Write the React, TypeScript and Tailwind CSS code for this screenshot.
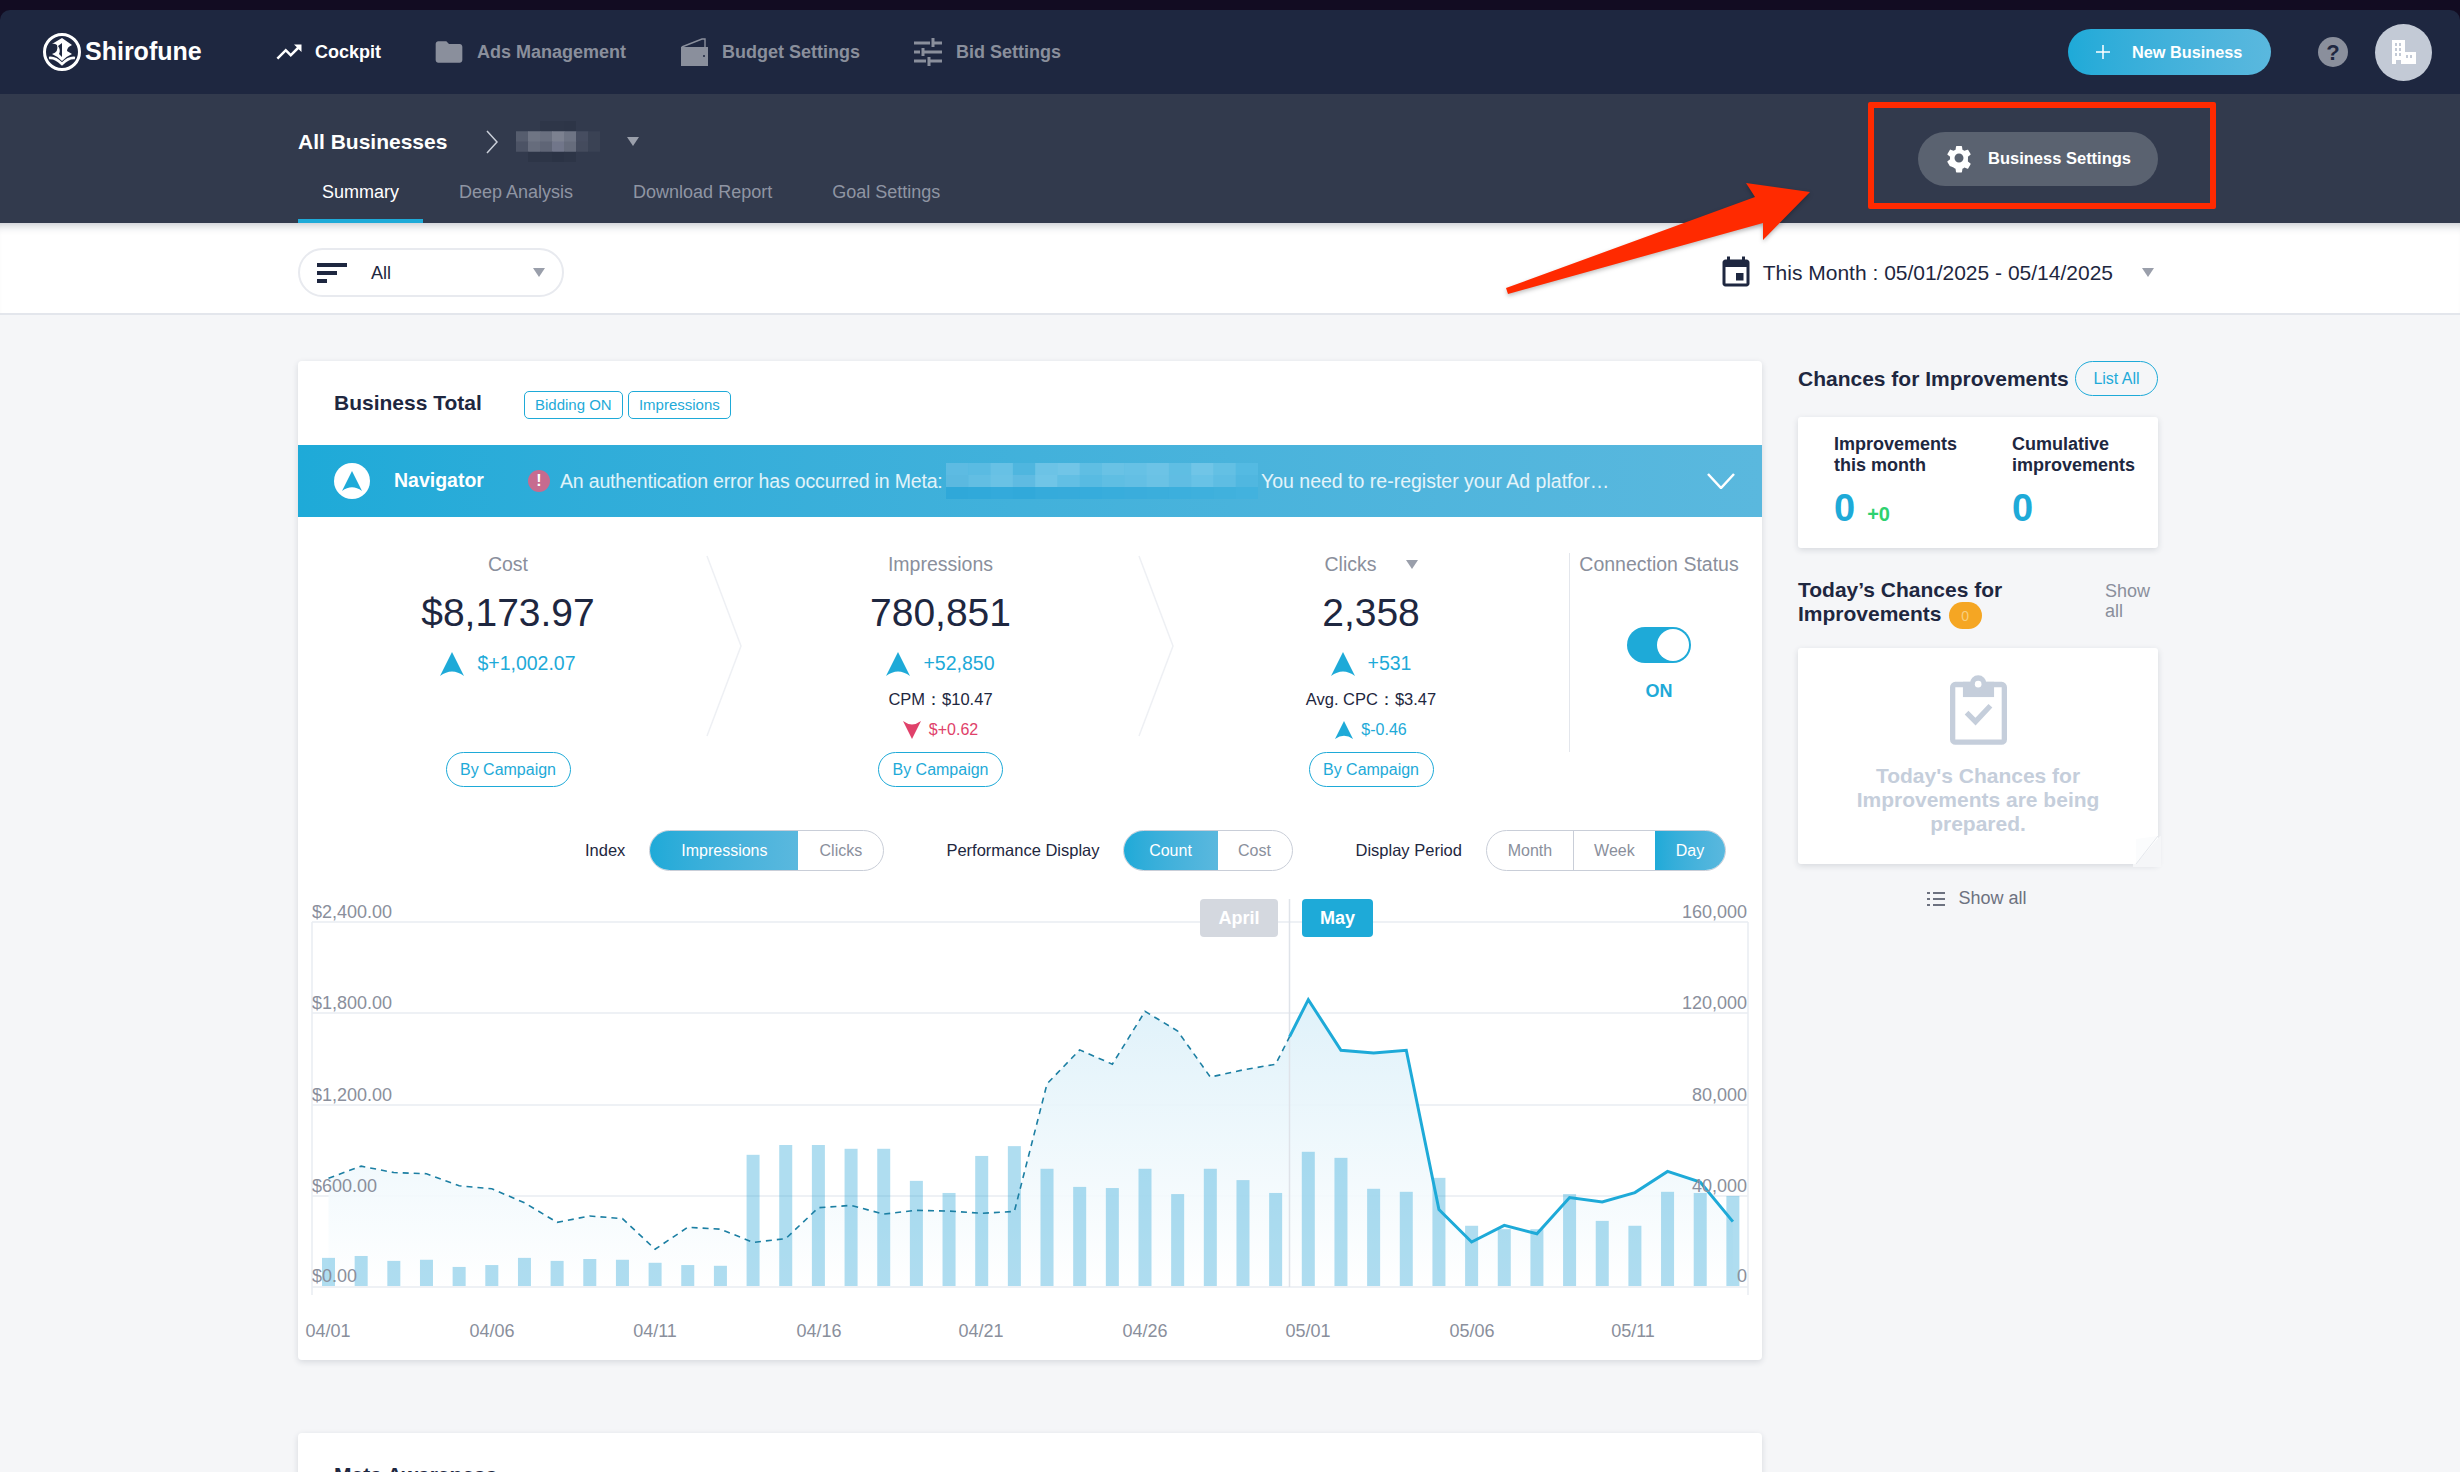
import React from "react";

const FONT = "font-['Liberation_Sans',Arial,sans-serif]";

// chart data read off the picture, in page pixels
const toY = (v: number) => 880 + v / 2.649;
const barX = (i: number) => 328.5 + i * 32.66;

const barTops = [
  1001, 996, 1009, 1006, 1025, 1020, 1001, 1009, 1004, 1006, 1014, 1020, 1022, 728, 702, 702, 712, 712, 797, 829, 731,
  705, 765, 813, 816, 765, 832, 765, 795, 829, 720, 736, 818, 826, 789, 916, 925, 925, 832, 903, 916, 826, 829, 837,
];
const linePts = [
  790, 758, 775, 778, 810, 818, 855, 907, 890, 897, 978, 920, 925, 960, 950, 868, 862, 885, 875, 877, 883,
  878, 540, 450, 488, 348, 400, 522, 503, 488, 317, 451, 458, 451, 873, 959, 915, 937, 841, 853, 828, 772, 800, 905,
];

const SPLIT_X = 1289.5;

function Chart() {
  const pts = linePts.map((v, i) => [barX(i), toY(v)]);
  const [x0, y0] = pts[29];
  const [x1, y1] = pts[30];
  const splitY = y0 + ((SPLIT_X - x0) / (x1 - x0)) * (y1 - y0);
  const dashed = [...pts.slice(0, 30), [SPLIT_X, splitY]];
  const solid = [[SPLIT_X, splitY], ...pts.slice(30)];
  const str = (a: number[][]) => a.map((p) => p.join(",")).join(" ");
  const area = `${pts[0][0]},1286 ${str(pts)} ${pts[43][0]},1286`;

  const gridY = [922, 1013, 1105, 1196, 1287];
  const left = ["$2,400.00", "$1,800.00", "$1,200.00", "$600.00", "$0.00"];
  const right = ["160,000", "120,000", "80,000", "40,000", "0"];
  const dates: [string, number][] = [
    ["04/01", 328], ["04/06", 492], ["04/11", 655], ["04/16", 819], ["04/21", 981],
    ["04/26", 1145], ["05/01", 1308], ["05/06", 1472], ["05/11", 1633],
  ];

  return (
    <div className="relative mt-[24px] h-[465px] w-[1464px]">
      <svg width="1464" height="465" viewBox="298 895 1464 465" className="block">
        <defs>
          <linearGradient id="areaFill" gradientUnits="userSpaceOnUse" x1="0" y1="1000" x2="0" y2="1290">
            <stop offset="0" stopColor="#dcf0f9" />
            <stop offset="1" stopColor="#ffffff" />
          </linearGradient>
        </defs>
        {gridY.map((y) => (
          <line key={y} x1="312" x2="1748" y1={y} y2={y} stroke="#e9edf2" strokeWidth="1.5" />
        ))}
        <line x1="312" x2="312" y1="922" y2="1295" stroke="#e9edf2" strokeWidth="1.5" />
        <line x1="1748" x2="1748" y1="922" y2="1295" stroke="#e9edf2" strokeWidth="1.5" />
        <polygon points={area} fill="url(#areaFill)" opacity="0.9" />
        <line x1={SPLIT_X} x2={SPLIT_X} y1="899" y2="1287" stroke="#dfe3e9" strokeWidth="1.5" />
        {barTops.map((t, i) => (
          <rect key={i} x={barX(i) - 6.5} y={toY(t)} width="13" height={1286 - toY(t)} fill="#1a9fd4" opacity="0.35" />
        ))}
        <polyline points={str(dashed)} fill="none" stroke="#1c7fa3" strokeWidth="1.6" strokeDasharray="6 5" />
        <polyline points={str(solid)} fill="none" stroke="#1eaad8" strokeWidth="3" />
        <g fontFamily="'Liberation Sans', Arial, sans-serif" fontSize="18" fill="#8a8f9c">
          {left.map((t, i) => (
            <text key={t} x="312" y={[918, 1009, 1101, 1192, 1282][i]}>{t}</text>
          ))}
          {right.map((t, i) => (
            <text key={t} x="1747" y={[918, 1009, 1101, 1192, 1282][i]} textAnchor="end">{t}</text>
          ))}
          {dates.map(([t, x]) => (
            <text key={t} x={x} y="1337" textAnchor="middle">{t}</text>
          ))}
        </g>
      </svg>
      <div className="absolute left-[902px] top-[4px] flex h-[38px] w-[78px] items-center justify-center rounded-[4px] bg-[#d4d8df] text-[18px] font-bold text-white">
        April
      </div>
      <div className="absolute left-[1004px] top-[4px] flex h-[38px] w-[71px] items-center justify-center rounded-[4px] bg-[#1eaad8] text-[18px] font-bold text-white">
        May
      </div>
    </div>
  );
}

function Caret({ className }: { className?: string }) {
  return (
    <svg width="12" height="9" viewBox="0 0 12 9" className={className}>
      <polygon points="0,0 12,0 6,9" fill="#9a9fab" />
    </svg>
  );
}

function NavArrow({ size, color, down }: { size: number; color: string; down?: boolean }) {
  return (
    <svg width={size} height={size} viewBox="0 0 24 24" className={down ? "rotate-180" : ""}>
      <path d="M12 0L24 24Q12 15 0 24Z" fill={color} />
    </svg>
  );
}

function NavItem({ icon, label, active, className }: { icon: React.ReactNode; label: string; active?: boolean; className?: string }) {
  return (
    <div className={`flex items-center ${className ?? ""}`}>
      {icon}
      <span className={`text-[18px] font-bold ${active ? "text-white" : "text-[#8a8f9c]"}`}>{label}</span>
    </div>
  );
}

function Logo() {
  return (
    <svg width="40" height="40" viewBox="0 0 40 40">
      <circle cx="20" cy="20" r="17.5" fill="none" stroke="#fff" strokeWidth="3" />
      <path d="M20 6L30 13Q25 15 25 19L30 22Q25 24 20 29Q15 24 10 22Q17 20 15 13Q12 11 10 12Z" fill="#fff" />
      <path d="M20 11L16 14Q19 18 17 22L20 25Z" fill="#1e2740" />
      <path d="M7 26Q13 25 20 32Q27 25 33 26" fill="none" stroke="#fff" strokeWidth="2.5" />
    </svg>
  );
}

function TopNav() {
  return (
    <div className="bg-[#120c22] pt-[10px]">
      <div className="flex h-[84px] items-center rounded-t-[10px] bg-[#1e2740] pl-[42px]">
        <Logo />
        <span className="ml-[3px] w-[189px] text-[25px] font-bold text-white">Shirofune</span>
        <NavItem
          active
          label="Cockpit"
          icon={
            <svg width="30" height="30" viewBox="0 0 24 24" className="mr-[11px]">
              <path fill="#fff" d="M16 6l2.29 2.29-4.88 4.88-4-4L2 16.59 3.41 18l6-6 4 4 6.3-6.29L22 12V6z" />
            </svg>
          }
        />
        <NavItem
          className="ml-[52px]"
          label="Ads Management"
          icon={
            <svg width="32" height="32" viewBox="0 0 24 24" className="mr-[12px]">
              <path fill="#8a8f9c" d="M10 4H4c-1.1 0-1.99.9-1.99 2L2 18c0 1.1.9 2 2 2h16c1.1 0 2-.9 2-2V8c0-1.1-.9-2-2-2h-8l-2-2z" />
            </svg>
          }
        />
        <NavItem
          className="ml-[55px]"
          label="Budget Settings"
          icon={
            <svg width="27" height="28" viewBox="0 0 27 28" className="mr-[14px]">
              <path d="M0 9H27V28H0Z" fill="#8a8f9c" />
              <path d="M0.7 9L21 1H24V9" fill="none" stroke="#8a8f9c" strokeWidth="1.4" />
              <circle cx="23" cy="18" r="1" fill="#1e2740" />
            </svg>
          }
        />
        <NavItem
          className="ml-[54px]"
          label="Bid Settings"
          icon={
            <svg width="28" height="28" viewBox="0 0 28 28" className="mr-[14px]">
              <path
                d="M0 5H16M20 5H28M19 0V9M0 14H6M10 14H28M9 10V18M0 23H12M16 23H28M15 19V28"
                fill="none"
                stroke="#8a8f9c"
                strokeWidth="3"
              />
            </svg>
          }
        />
        <button className="ml-auto flex h-[46px] w-[203px] items-center rounded-full bg-gradient-to-r from-[#1eaad8] to-[#5ab8de] pl-[27px] text-[16.3px] font-bold text-white">
          <svg width="16" height="16" viewBox="0 0 16 16" className="mr-[21px]">
            <path d="M8 1V15M1 8H15" stroke="#fff" strokeWidth="1.5" />
          </svg>
          New Business
        </button>
        <div className="ml-[47px] flex h-[30px] w-[30px] items-center justify-center rounded-full bg-[#8a8f9c] text-[22px] font-bold text-[#1e2740]">
          ?
        </div>
        <div className="ml-[27px] mr-[28px] flex h-[57px] w-[57px] items-center justify-center rounded-full bg-[#c3cad6]">
          <svg width="24" height="24" viewBox="0 0 24 24">
            <path
              fill="#fff"
              fillRule="evenodd"
              d="M0 0H13V12H24V24H9V20H4V24H0ZM3 3V6H5V3ZM7 3V6H9V3ZM3 8V11H5V8ZM7 8V11H9V8ZM3 13V16H5V13ZM7 13V16H9V13ZM14 15V18H16V15ZM18 15V18H20V15Z"
            />
          </svg>
        </div>
      </div>
    </div>
  );
}

function Mosaic({ w, h, cols, rows, colors, className }: { w: number; h: number; cols: number; rows: number; colors: string[][]; className?: string }) {
  const cw = w / cols;
  const ch = h / rows;
  return (
    <svg width={w} height={h} className={className}>
      {colors.map((row, r) =>
        row.map((c, i) => <rect key={`${r}-${i}`} x={i * cw} y={r * ch} width={cw + 0.5} height={ch + 0.5} fill={c} />),
      )}
    </svg>
  );
}

const nameBlur = [
  ["#323a4d", "#323a4d", "#2e3648", "#2e3648", "#2d3547", "#323a4d", "#323a4d"],
  ["#565d6e", "#6f7584", "#6a7080", "#7c8190", "#6e7484", "#464d60", "#3a4254"],
  ["#4c5365", "#666c7c", "#5f6576", "#71768a", "#666c7c", "#444b5d", "#3a4254"],
  ["#323a4d", "#2d3547", "#2d3547", "#2b3345", "#2d3547", "#323a4d", "#323a4d"],
];

const metaBlur = [
  ["#5dbbe2", "#5abbe2", "#67c1e5", "#4fb6df", "#6cc3e6", "#71c5e7", "#5fbee3", "#69c2e5", "#66c1e5", "#6cc3e6", "#5fbee3", "#70c5e7", "#63c0e4", "#54bae2"],
  ["#5bb9e0", "#62bee3", "#6ac2e5", "#5fbbe2", "#70c5e7", "#62bfe4", "#58bbe2", "#5fbee3", "#63bfe4", "#6ac2e5", "#60bde3", "#68c2e6", "#5ebde3", "#50b7e0"],
  ["#2fa8d9", "#30a9da", "#33aadb", "#31a9da", "#35abdb", "#36abdb", "#36acdc", "#38addc", "#3aaddc", "#3baedc", "#3cafdd", "#3eb0dd", "#40b1dd", "#42b2de"],
];

function SubNav() {
  const tabs = ["Deep Analysis", "Download Report", "Goal Settings"];
  return (
    <div className="h-[129px] bg-[#323a4d] pl-[298px]">
      <div className="flex h-[89px] items-center pt-[6px]">
        <span className="text-[21px] font-bold text-white">All Businesses</span>
        <svg width="12" height="24" viewBox="0 0 12 24" className="ml-[39px]">
          <polyline points="1,1 11,12 1,23" fill="none" stroke="#c9ced8" strokeWidth="1.5" />
        </svg>
        <Mosaic w={84} h={41} cols={7} rows={4} colors={nameBlur} className="ml-[18px]" />
        <Caret className="ml-[27px]" />
      </div>
      <div className="flex h-[40px] text-[18px] leading-[18px]">
        <div className="flex h-[40px] w-[125px] justify-center border-b-[4px] border-[#1eaad8] text-white">Summary</div>
        {tabs.map((t, i) => (
          <div key={t} className={`text-[#8f95a3] ${i === 0 ? "ml-[36px]" : "ml-[60px]"}`}>
            {t}
          </div>
        ))}
      </div>
    </div>
  );
}

function FilterBar() {
  return (
    <div className="flex h-[92px] items-center border-b-[2px] border-[#e3e6ec] bg-white pl-[298px] pr-[306px] pt-[9px] shadow-[inset_0_10px_10px_-8px_rgba(30,39,64,0.28)]">
      <div className="flex h-[49px] w-[266px] items-center rounded-full border-[2px] border-[#e8eaef] pl-[17px]">
        <div className="flex w-[30px] flex-col gap-[4px]">
          <div className="h-[4px] w-[30px] bg-[#1e2740]" />
          <div className="h-[4px] w-[20px] bg-[#1e2740]" />
          <div className="h-[4px] w-[10px] bg-[#1e2740]" />
        </div>
        <span className="ml-[24px] pt-[2px] text-[18px] text-[#1e2740]">All</span>
        <Caret className="ml-auto mr-[17px]" />
      </div>
      <svg width="36" height="36" viewBox="0 0 24 24" className="ml-auto">
        <path
          fill="#1e2740"
          d="M17 12h-5v5h5v-5zM16 1v2H8V1H6v2H5c-1.11 0-1.99.9-1.99 2L3 19c0 1.1.89 2 2 2h14c1.1 0 2-.9 2-2V5c0-1.1-.9-2-2-2h-1V1h-2zm3 18H5V8h14v11z"
        />
      </svg>
      <span className="ml-[9px] text-[21px] text-[#1e2740]">This Month : 05/01/2025 - 05/14/2025</span>
      <Caret className="ml-[29px]" />
    </div>
  );
}

function Tag({ children, className }: { children: React.ReactNode; className?: string }) {
  return (
    <span className={`flex h-[28px] items-center justify-center whitespace-nowrap rounded-[5px] border border-[#1eaad8] text-[15px] text-[#1eaad8] ${className ?? ""}`}>
      {children}
    </span>
  );
}

function ByCampaign() {
  return (
    <button className="mt-auto flex h-[35px] w-[125px] items-center justify-center rounded-full border border-[#1eaad8] text-[16px] text-[#1eaad8]">
      By Campaign
    </button>
  );
}

function Delta({ value }: { value: string }) {
  return (
    <div className="mt-[13px] flex h-[28px] items-center gap-[13px]">
      <NavArrow size={24} color="#1eaad8" />
      <span className="text-[19.5px] text-[#1eaad8]">{value}</span>
    </div>
  );
}

function Stat({ label, value, delta, sub, subDelta, subDown, caret, className, chevronLeft }: {
  label: string;
  value: string;
  delta: string;
  sub?: string;
  subDelta?: string;
  subDown?: boolean;
  caret?: boolean;
  className: string;
  chevronLeft?: string;
}) {
  return (
    <div className={`relative flex h-full flex-col items-center pt-[35px] ${className}`}>
      <div className="flex h-[24px] items-center text-[19.5px] leading-[24px] text-[#8a8f9c]">
        {label}
        {caret && <Caret className="ml-[29px]" />}
      </div>
      <div className="mt-[13px] h-[48px] text-[39px] leading-[48px] text-[#1e2740]">{value}</div>
      <Delta value={delta} />
      {sub && <div className="mt-[10px] h-[22px] text-[16.5px] leading-[22px] text-[#1e2740]">{sub}</div>}
      {subDelta && (
        <div className="mt-[9px] flex h-[22px] items-center gap-[8px]">
          <NavArrow size={18} color={subDown ? "#e0416a" : "#1eaad8"} down={subDown} />
          <span className={`text-[16px] ${subDown ? "text-[#e0416a]" : "text-[#1eaad8]"}`}>{subDelta}</span>
        </div>
      )}
      <ByCampaign />
      {chevronLeft && (
        <svg width="36" height="182" viewBox="0 0 36 182" className={`absolute top-[38px] ${chevronLeft}`}>
          <polyline points="1,1 35,91 1,181" fill="none" stroke="#eef0f4" strokeWidth="1.5" />
        </svg>
      )}
    </div>
  );
}

function Segmented({ items, active, widths }: { items: string[]; active: string; widths: string[] }) {
  return (
    <div className="flex h-[41px] overflow-hidden rounded-full border border-[#c9ced8]">
      {items.map((t, i) => (
        <div
          key={t}
          className={`flex items-center justify-center text-[16px] ${widths[i]} ${
            t === active
              ? "bg-gradient-to-r from-[#1eaad8] to-[#5ab8de] text-white"
              : `text-[#8a8f9c] ${i < items.length - 1 && items[i + 1] !== active ? "border-r border-[#c9ced8]" : ""}`
          }`}
        >
          {t}
        </div>
      ))}
    </div>
  );
}

function MainCard() {
  return (
    <div className="h-[999px] w-[1464px] rounded-[4px] bg-white shadow-[0_2px_6px_rgba(30,39,64,0.14)]">
      <div className="flex h-[84px] items-center pl-[36px]">
        <span className="text-[21px] font-bold text-[#1e2740]">Business Total</span>
        <Tag className="ml-[42px] mt-[4px] w-[99px]">Bidding ON</Tag>
        <Tag className="ml-[5px] mt-[4px] w-[103px]">Impressions</Tag>
      </div>
      <div className="flex h-[72px] items-center bg-gradient-to-r from-[#1eaad8] to-[#5ab8de] pl-[36px]">
        <div className="flex h-[36px] w-[36px] items-center justify-center rounded-full bg-white">
          <NavArrow size={20} color="#1eaad8" />
        </div>
        <span className="ml-[24px] w-[90px] text-[19.5px] font-bold text-white">Navigator</span>
        <div className="ml-[44px] flex h-[22px] w-[22px] items-center justify-center rounded-full bg-[#c76b8f] text-[16px] font-bold text-white">
          !
        </div>
        <span className="ml-[10px] w-[386px] whitespace-nowrap pt-[2px] text-[19.5px] tracking-[-0.17px] text-white/85">An authentication error has occurred in Meta:</span>
        <Mosaic w={312} h={36} cols={14} rows={3} colors={metaBlur} />
        <span className="ml-[3px] whitespace-nowrap pt-[2px] text-[19.5px] text-white/85">You need to re-register your Ad platfor…</span>
        <svg width="28" height="16" viewBox="0 0 28 16" className="ml-auto mr-[27px]">
          <polyline points="1,1 14,15 27,1" fill="none" stroke="#fff" strokeWidth="2.5" />
        </svg>
      </div>
      <div className="flex h-[270px]">
        <Stat className="w-[420px]" chevronLeft="left-[408px]" label="Cost" value="$8,173.97" delta="$+1,002.07" />
        <Stat
          className="w-[455px] pr-[10px]"
          chevronLeft="left-[420px]"
          label="Impressions"
          value="780,851"
          delta="+52,850"
          sub="CPM：$10.47"
          subDelta="$+0.62"
          subDown
        />
        <Stat className="w-[396px]" caret label="Clicks" value="2,358" delta="+531" sub="Avg. CPC：$3.47" subDelta="$-0.46" />
        <div className="flex w-[193px] flex-col items-center pr-[13px] pt-[35px]">
          <span className="h-[24px] whitespace-nowrap text-[19.5px] leading-[24px] text-[#8a8f9c]">Connection Status</span>
          <div className="mt-[51px] flex h-[36px] w-[64px] items-center justify-end rounded-full bg-[#1eaad8] pr-[2px]">
            <div className="h-[32px] w-[32px] rounded-full bg-white" />
          </div>
          <span className="mt-[15px] text-[18px] font-bold text-[#1eaad8]">ON</span>
        </div>
      </div>
      <div className="mt-[43px] flex items-center pl-[287px] text-[16.5px] text-[#1e2740]">
        <span>Index</span>
        <div className="ml-[24px]">
          <Segmented items={["Impressions", "Clicks"]} active="Impressions" widths={["w-[148px]", "w-[85px]"]} />
        </div>
        <span className="ml-[62px] whitespace-nowrap">Performance Display</span>
        <div className="ml-[23px]">
          <Segmented items={["Count", "Cost"]} active="Count" widths={["w-[94px]", "w-[74px]"]} />
        </div>
        <span className="ml-[63px] whitespace-nowrap">Display Period</span>
        <div className="ml-[24px]">
          <Segmented items={["Month", "Week", "Day"]} active="Day" widths={["w-[87px]", "w-[81px]", "w-[70px]"]} />
        </div>
      </div>
      <Chart />
    </div>
  );
}

function SideColumn() {
  return (
    <div className="w-[360px]">
      <div className="flex h-[35px] items-center justify-between">
        <span className="whitespace-nowrap text-[21px] font-bold text-[#1e2740]">Chances for Improvements</span>
        <button className="flex h-[35px] w-[83px] items-center justify-center rounded-full border border-[#1eaad8] text-[16px] text-[#1eaad8]">
          List All
        </button>
      </div>
      <div className="mt-[21px] flex h-[131px] rounded-[3px] bg-white pl-[36px] pt-[17px] shadow-[0_2px_6px_rgba(30,39,64,0.14)]">
        <div className="w-[178px]">
          <div className="text-[18px] font-bold leading-[21px] text-[#1e2740]">
            Improvements
            <br />
            this month
          </div>
          <div className="mt-[10px] flex items-end">
            <span className="text-[38px] font-bold leading-[44px] text-[#1eaad8]">0</span>
            <span className="mb-[5px] ml-[12px] text-[20px] font-bold leading-[22px] text-[#2ed16f]">+0</span>
          </div>
        </div>
        <div>
          <div className="text-[18px] font-bold leading-[21px] text-[#1e2740]">
            Cumulative
            <br />
            improvements
          </div>
          <div className="mt-[10px] text-[38px] font-bold leading-[44px] text-[#1eaad8]">0</div>
        </div>
      </div>
      <div className="mt-[30px] flex justify-between">
        <div className="text-[21px] font-bold leading-[24px] text-[#1e2740]">
          Today’s Chances for
          <br />
          Improvements
          <span className="ml-[7px] inline-flex h-[27px] w-[33px] items-center justify-center rounded-full bg-[#f5a623] align-middle text-[14px] font-normal text-[#f8cf7e]">
            0
          </span>
        </div>
        <div className="mr-[7px] w-[46px] pt-[3px] text-[18px] leading-[20px] text-[#8a8f9c]">Show all</div>
      </div>
      <div className="relative mt-[19px] flex h-[216px] flex-col items-center rounded-[3px] bg-white pt-[27px] shadow-[0_2px_6px_rgba(30,39,64,0.14)]">
        <svg width="57" height="70" viewBox="58 45 172 210">
          <rect x="66" y="73" width="156" height="174" rx="8" fill="none" stroke="#c5cedb" strokeWidth="16" />
          <rect x="97" y="65" width="94" height="46" fill="#c5cedb" />
          <circle cx="143" cy="70" r="25" fill="#c5cedb" />
          <circle cx="143" cy="72" r="10" fill="#fff" />
          <polyline points="108,158 135,185 180,137" fill="none" stroke="#c5cedb" strokeWidth="16" />
        </svg>
        <div className="mt-[19px] w-[320px] text-center text-[21px] font-bold leading-[24px] text-[#c5cedb]">
          Today's Chances for Improvements are being prepared.
        </div>
        <svg width="28" height="34" viewBox="0 0 28 34" className="absolute -bottom-[3px] -right-[3px]">
          <polygon points="27,3 28,3 28,34 0,34 0,31 3,31" fill="#f5f6f8" />
          <polygon points="3,6 25,3 3,31" fill="#fbfcfd" />
          <polyline points="3,31 25,3" fill="none" stroke="#e4e7ec" strokeWidth="1" />
        </svg>
      </div>
      <div className="mt-[21px] flex items-center justify-center pr-[2px] text-[18px] text-[#6d7280]">
        <svg width="18" height="16" viewBox="0 0 18 16" className="mr-[13px]">
          <path d="M0 2H3M6 2H18M0 8H3M6 8H18M0 14H3M6 14H18" stroke="#6d7280" strokeWidth="2" />
        </svg>
        Show all
      </div>
    </div>
  );
}

export default function App() {
  return (
    <div className={`relative h-[1472px] w-[2460px] overflow-hidden bg-[#f5f6f8] ${FONT}`}>
      <TopNav />
      <SubNav />
      <FilterBar />
      <div className="flex gap-[36px] pl-[298px] pt-[46px]">
        <div className="w-[1464px]">
          <MainCard />
          <div className="mt-[73px] h-[200px] rounded-[4px] bg-white pl-[36px] pt-[30px] shadow-[0_2px_6px_rgba(30,39,64,0.14)]">
            <span className="text-[21px] font-bold leading-[24px] text-[#1e2740]">Meta Awareness</span>
          </div>
        </div>
        <SideColumn />
      </div>

      {/* divider beside Connection Status, sits on the stats row */}
      <div className="absolute left-[1569px] top-[553px] h-[199px] w-px bg-[#e3e6ec]" />

      {/* red annotation laid over the screenshot */}
      <div className="absolute left-[1868px] top-[102px] h-[107px] w-[348px] rounded-[2px] border-[6px] border-[#ff2a00]" />
      <div className="absolute left-[1918px] top-[132px] flex h-[54px] w-[240px] items-center rounded-full bg-[#5a6270] pb-[2px] pl-[26px] text-[16.5px] font-bold text-white">
        <svg width="30" height="30" viewBox="0 0 24 24" className="mr-[14px]">
          <path
            fill="#fff"
            d="M19.14 12.94c.04-.3.06-.61.06-.94 0-.32-.02-.64-.07-.94l2.03-1.58c.18-.14.23-.41.12-.61l-1.92-3.32c-.12-.22-.37-.29-.59-.22l-2.39.96c-.5-.38-1.03-.7-1.62-.94l-.36-2.54c-.04-.24-.24-.41-.48-.41h-3.84c-.24 0-.43.17-.47.41l-.36 2.54c-.59.24-1.13.57-1.62.94l-2.39-.96c-.22-.08-.47 0-.59.22L2.74 8.87c-.12.21-.08.47.12.61l2.03 1.58c-.05.3-.09.63-.09.94s.02.64.07.94l-2.03 1.58c-.18.14-.23.41-.12.61l1.92 3.32c.12.22.37.29.59.22l2.39.96c.5.38 1.03.7 1.62.94l.36 2.54c.05.24.24.41.48.41h3.84c.24 0 .44-.17.47-.41l.36-2.54c.59-.24 1.13-.56 1.62-.94l2.39.96c.22.08.47 0 .59-.22l1.92-3.32c.12-.22.07-.47-.12-.61l-2.01-1.58zM12 15.6c-1.98 0-3.6-1.62-3.6-3.6s1.62-3.6 3.6-3.6 3.6 1.62 3.6 3.6-1.62 3.6-3.6 3.6z"
          />
        </svg>
        Business Settings
      </div>
      <svg width="320" height="125" viewBox="1500 175 320 125" className="absolute left-[1500px] top-[175px] drop-shadow-[0_2px_2px_rgba(0,0,0,0.25)]">
        <polygon points="1506,288 1755,197 1746,183 1810,192 1763,240 1763,223 1508,294" fill="#ff2a00" />
      </svg>
    </div>
  );
}
